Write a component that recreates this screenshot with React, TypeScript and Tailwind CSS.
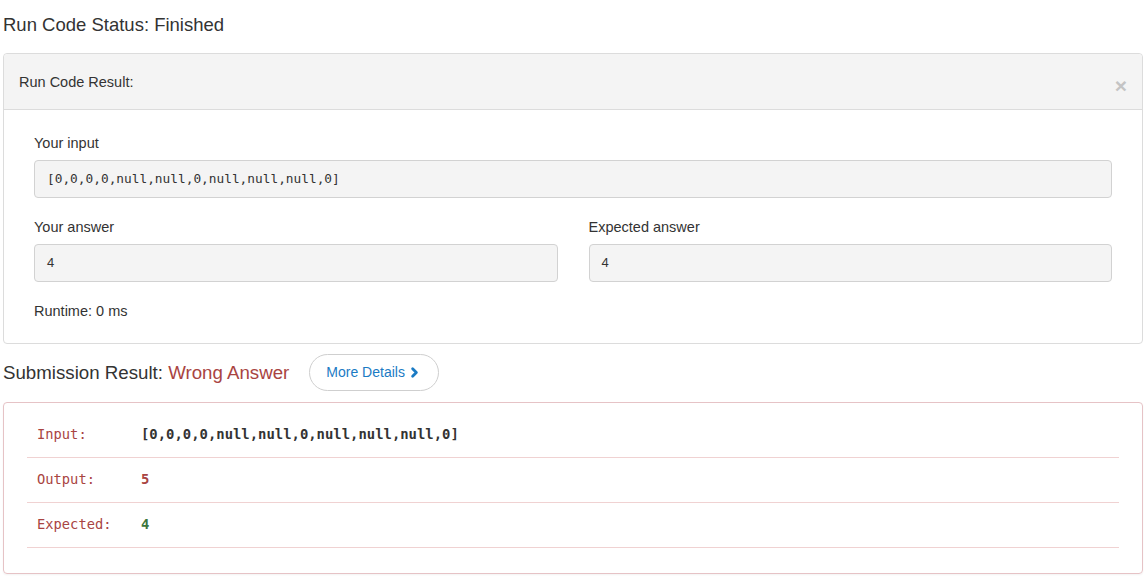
import React from 'react';
import { ChevronRight } from 'lucide-react';

const sans = { fontFamily: '"Liberation Sans", Arial, sans-serif' };

const Field = ({ label, value, mono }: { label: string; value: string; mono?: boolean }) => (
    <div className="flex flex-col">
        <label className="text-[14.5px] leading-[20px] text-[#333] mb-[7px]">{label}</label>
        <div
            className={`h-[38px] flex items-center px-[12px] bg-[#f4f4f4] border border-[#d2d2d2] rounded-[4px] text-[#333] ${mono ? 'font-["DejaVu_Sans_Mono",monospace] text-[12.8px]' : 'text-[13px]'}`}
        >
            {value}
        </div>
    </div>
);

const ResultRow = ({ label, value, valueClass }: { label: string; value: string; valueClass: string }) => (
    <div className="flex items-center h-[45px] pb-[2px] border-b border-[#f0d2d2] pl-[10px]">
        <span className="w-[104px] text-[#a94442] text-[13.75px]">{label}</span>
        <span className={`font-bold text-[13.9px] ${valueClass}`}>{value}</span>
    </div>
);

export default function App() {
    const input = '[0,0,0,0,null,null,0,null,null,null,0]';

    return (
        <div className="w-[1146px] h-[580px] bg-white px-[3px] pt-[14px] overflow-hidden" style={sans}>

            {/* RUN CODE STATUS */}
            <h3 className="text-[18.5px] leading-[22px] text-[#333] mb-[17px]">Run Code Status: Finished</h3>

            <div className="border border-[#dcdcdc] rounded-[4px] w-[1140px]">
                <div className="h-[56px] flex items-center justify-between bg-[#f4f4f4] border-b border-[#dcdcdc] pl-[15px] pr-[15px] rounded-t-[4px]">
                    <span className="pt-[3px] text-[14.5px] text-[#333]">Run Code Result:</span>
                    <span className="relative top-[4px] text-[21px] font-bold leading-none text-[#c4c4c4]">×</span>
                </div>

                <div className="px-[30px] pt-[23px] pb-[22px] flex flex-col gap-[19px]">
                    <Field label="Your input" value={input} mono />
                    <div className="grid grid-cols-2 gap-[31px]">
                        <Field label="Your answer" value="4" />
                        <Field label="Expected answer" value="4" />
                    </div>
                    <div className="text-[14.5px] leading-[20px] text-[#333]">Runtime: 0 ms</div>
                </div>
            </div>

            {/* SUBMISSION RESULT */}
            <div className="flex items-center mt-[10px] mb-[11px]">
                <h3 className="text-[18.7px] leading-[22px] text-[#333]">
                    Submission Result: <span className="text-[#a94442]">Wrong Answer</span>
                </h3>
                <button className="ml-[20px] h-[37px] px-[16px] rounded-full border border-[#cfcfcf] bg-white text-[#1b7bc4] text-[14px] flex items-center gap-[2px]">
                    More Details
                    <ChevronRight className="w-[15px] h-[15px]" strokeWidth={4.5} />
                </button>
            </div>

            <div className="w-[1140px] h-[172px] border border-[#e6c3c6] rounded-[4px] shadow-[0_1px_2px_rgba(0,0,0,0.05)] px-[23px] pt-[10px] font-['DejaVu_Sans_Mono',monospace]">
                <ResultRow label="Input:" value={input} valueClass="text-[#333]" />
                <ResultRow label="Output:" value="5" valueClass="text-[#a94442]" />
                <ResultRow label="Expected:" value="4" valueClass="text-[#3c763d]" />
            </div>
        </div>
    );
}
